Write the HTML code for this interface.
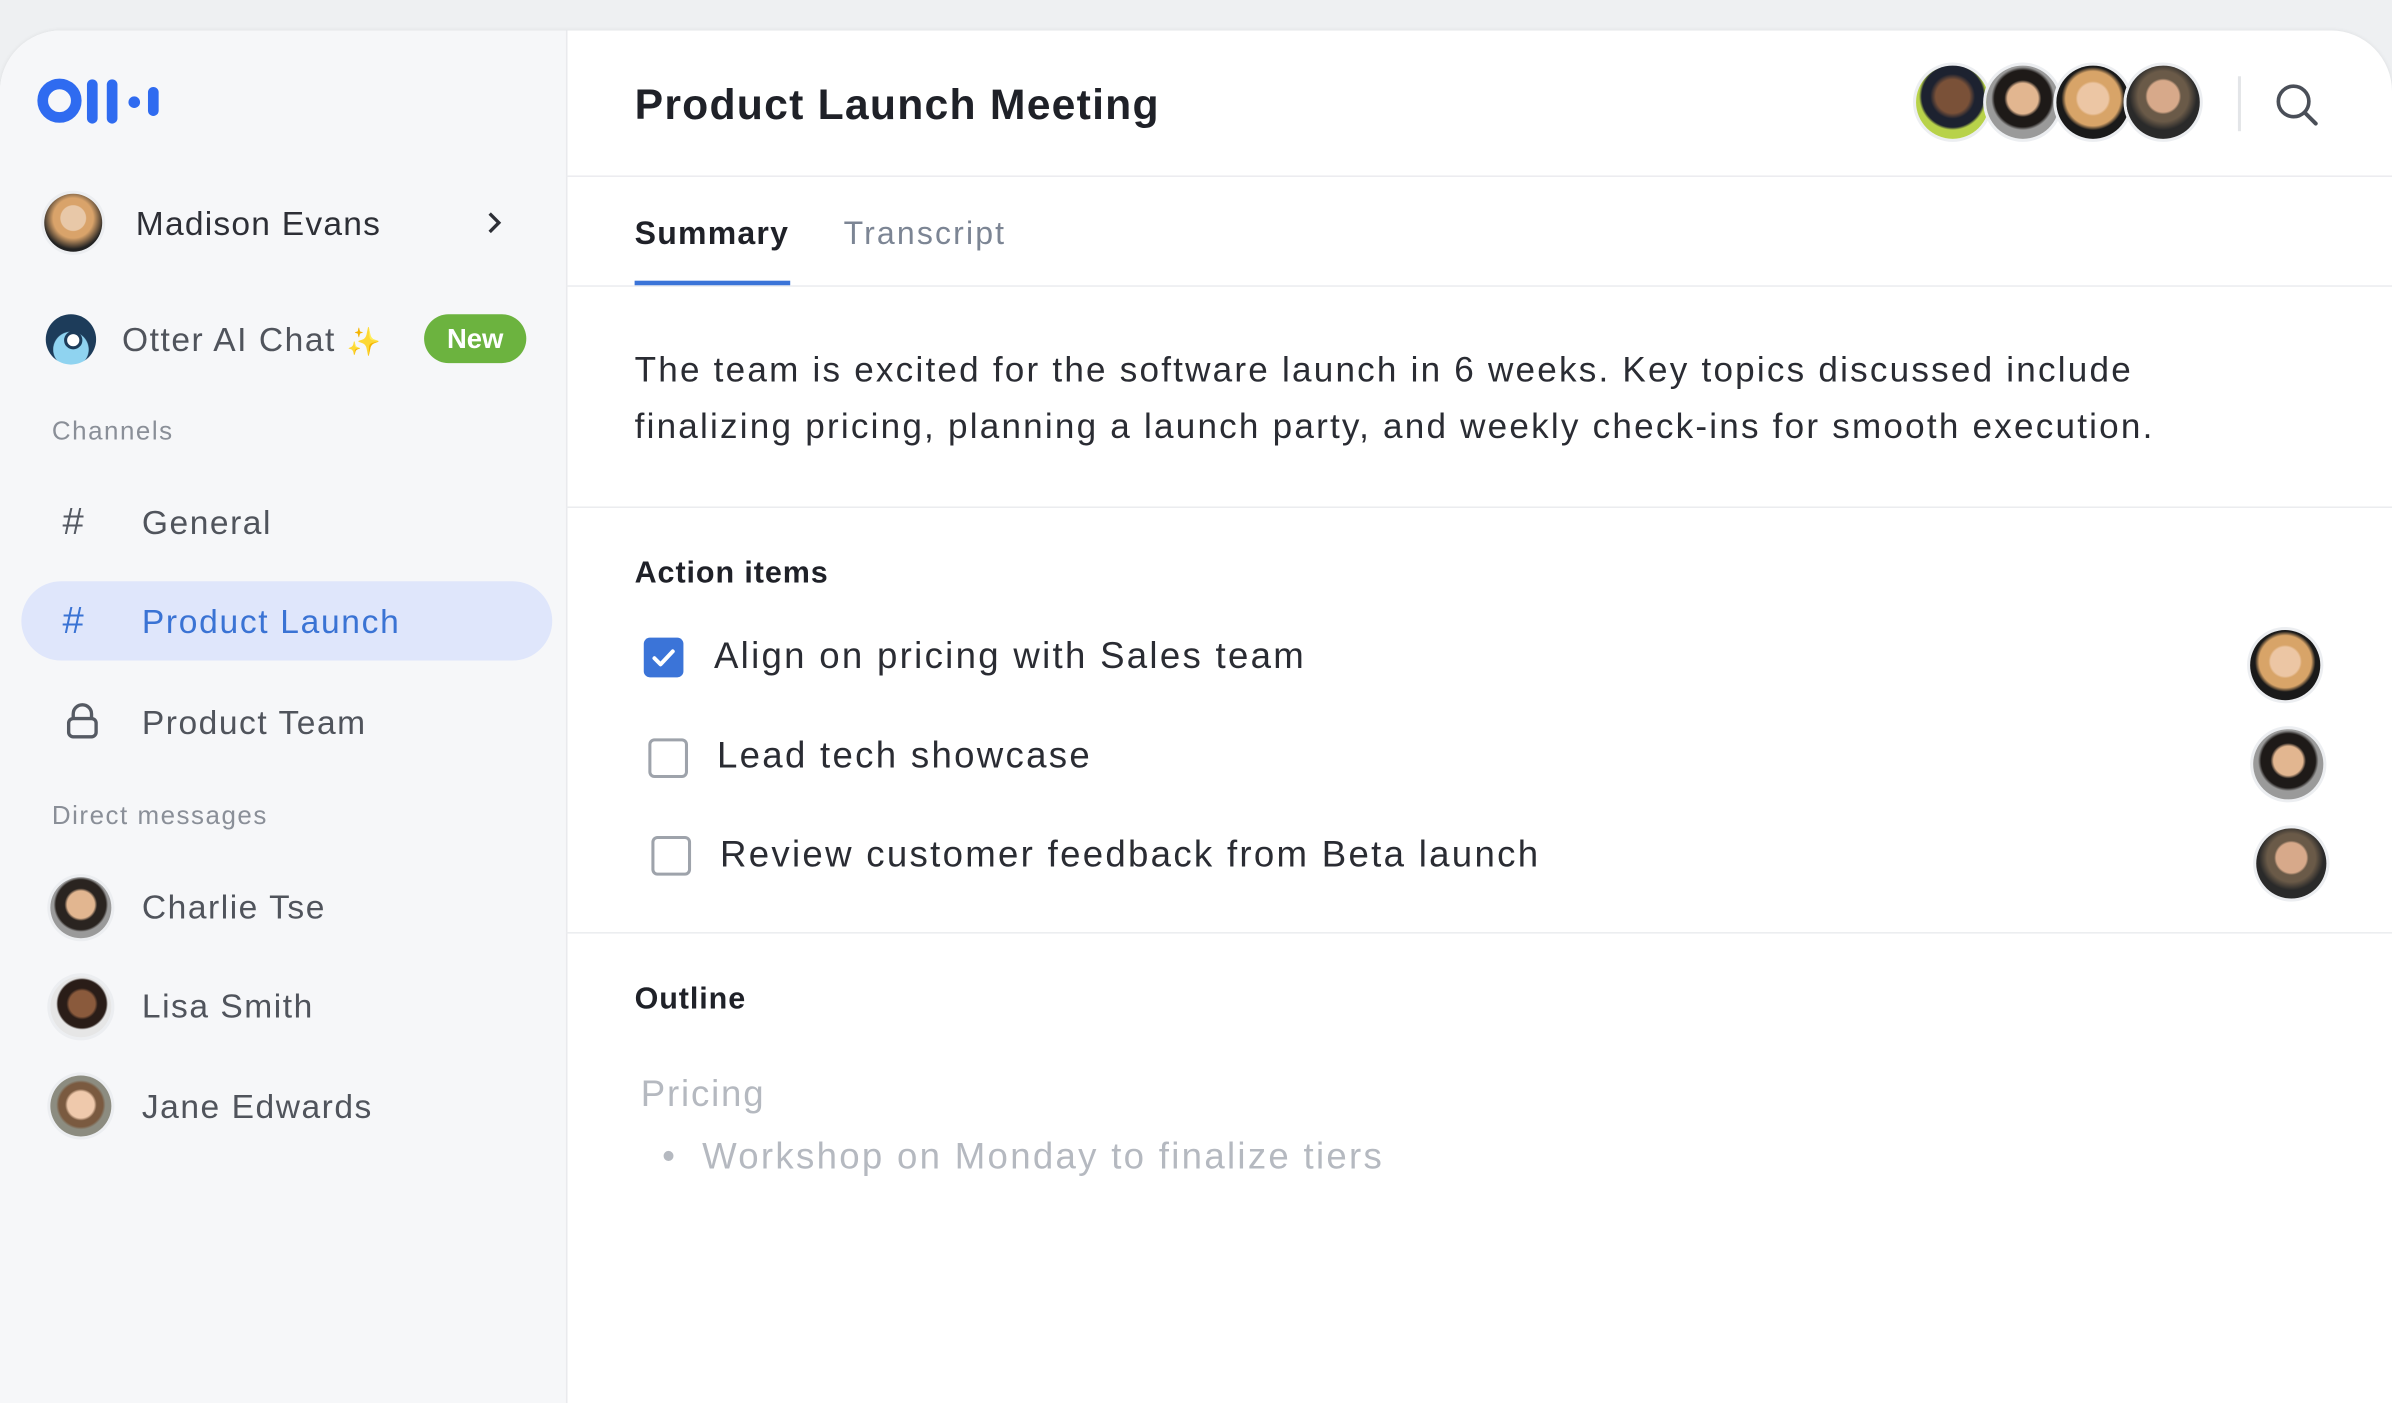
<!DOCTYPE html>
<html><head><meta charset="utf-8"><style>
html,body{margin:0;padding:0;width:2392px;height:1402px;overflow:hidden;background:#eef0f2;}
#w{position:absolute;left:0;top:0;width:1568px;height:919px;transform:scale(1.52551);transform-origin:0 0;font-family:"Liberation Sans",sans-serif;}
.card{position:absolute;left:0;top:20px;width:1568px;height:900px;background:#fff;border-radius:40px 40px 0 0;overflow:hidden;box-shadow:0 0 3px rgba(0,0,0,.08);}
.side{position:absolute;left:0;top:0;width:371px;height:100%;background:#f6f7f9;border-right:1px solid #e9eaed;}
.t{position:absolute;white-space:nowrap;line-height:1;letter-spacing:1px;}
.av{position:absolute;border-radius:50%;box-shadow:0 0 0 2px #eceef1;overflow:hidden;}
.hl{position:absolute;left:0;right:0;height:1px;background:#ebecef;}
.cb{position:absolute;width:22px;height:22px;border:2px solid #9ea3ab;border-radius:4px;}
</style></head><body><div id="w">
<div class="card">
<div class="side">
<svg style="position:absolute;left:24px;top:29px" width="82" height="34" viewBox="0 0 82 34"><circle cx="15" cy="17" r="11" fill="none" stroke="#2f6bf0" stroke-width="7"/><rect x="33" y="3" width="7" height="29" rx="3.5" fill="#2f6bf0"/><rect x="46" y="3" width="7" height="29" rx="3.5" fill="#2f6bf0"/><circle cx="64" cy="18" r="3.8" fill="#2f6bf0"/><rect x="73" y="8" width="7" height="19" rx="3.5" fill="#2f6bf0"/></svg>
<div class="av" style="left:29px;top:107px;width:38px;height:38px;background:radial-gradient(circle at 50% 42%,#e8c8a8 0 28%,#d9a36a 30% 45%,#222 70%)"></div>
<div class="t" style="left:89px;top:116px;font-size:22px;color:#2d2f36;letter-spacing:0.8px">Madison Evans</div>
<svg style="position:absolute;left:317px;top:118px" width="14" height="16" viewBox="0 0 14 16"><path d="M4 2l6 6-6 6" fill="none" stroke="#2d2f36" stroke-width="2.2"/></svg>
<div class="av" style="left:30px;top:186px;width:33px;height:33px;background:radial-gradient(circle at 50% 70%,#8fd3f0 0 40%,#1d3c5a 42%);box-shadow:none"></div>
<div style="position:absolute;left:42px;top:197px;width:8px;height:8px;border-radius:50%;background:#fff;border:2px solid #1d3c5a"></div>
<div class="t" style="left:80px;top:192px;font-size:22px;color:#50545c">Otter AI Chat <span style="color:#f2d36b;font-size:18px">✨</span></div>
<div style="position:absolute;left:278px;top:186px;width:67px;height:32px;border-radius:16px;background:#6cb33f;color:#fff;font-size:18px;font-weight:bold;text-align:center;line-height:32px">New</div>
<div class="t" style="left:34px;top:254px;font-size:17px;color:#8a8f98">Channels</div>
<div class="t" style="left:41px;top:310px;font-size:25px;color:#555a63">#</div>
<div class="t" style="left:93px;top:312px;font-size:22px;color:#50545c">General</div>
<div style="position:absolute;left:14px;top:361px;width:348px;height:52px;border-radius:26px;background:#dfe6fb"></div>
<div class="t" style="left:41px;top:375px;font-size:25px;color:#3a73d4">#</div>
<div class="t" style="left:93px;top:377px;font-size:22px;color:#3a73d4;letter-spacing:1.1px">Product Launch</div>
<svg style="position:absolute;left:43px;top:440px" width="22" height="26" viewBox="0 0 22 26"><path d="M5 11V8a6 6 0 0 1 12 0v3" fill="none" stroke="#555a63" stroke-width="2.2"/><rect x="2" y="11" width="18" height="12" rx="3" fill="none" stroke="#555a63" stroke-width="2.2"/></svg>
<div class="t" style="left:93px;top:443px;font-size:22px;color:#50545c">Product Team</div>
<div class="t" style="left:34px;top:506px;font-size:17px;color:#8a8f98">Direct messages</div>
<div class="av" style="left:33px;top:555px;width:40px;height:40px;background:radial-gradient(circle at 50% 45%,#e2b690 0 30%,#2a2420 36% 55%,#9a9a9a 60%)"></div>
<div class="t" style="left:93px;top:564px;font-size:22px;color:#50545c">Charlie Tse</div>
<div class="av" style="left:33px;top:620px;width:40px;height:40px;background:radial-gradient(circle at 52% 45%,#8a5a3c 0 28%,#2a1d18 34% 52%,#e6e6e6 56%)"></div>
<div class="t" style="left:93px;top:629px;font-size:22px;color:#50545c">Lisa Smith</div>
<div class="av" style="left:33px;top:685px;width:40px;height:40px;background:radial-gradient(circle at 50% 48%,#efc9ac 0 30%,#7a5a40 36% 50%,#8c8c80 56%)"></div>
<div class="t" style="left:93px;top:695px;font-size:22px;color:#50545c">Jane Edwards</div>
</div>
<!-- main -->
<div class="t" style="left:416px;top:35px;font-size:28px;font-weight:bold;color:#1f2128;letter-spacing:0.8px">Product Launch Meeting</div>
<div class="av" style="left:1256px;top:23px;width:48px;height:48px;background:radial-gradient(circle at 50% 42%,#7a5138 0 30%,#1d2230 40% 55%,#b8d24a 60%)"></div>
<div class="av" style="left:1302px;top:23px;width:48px;height:48px;background:radial-gradient(circle at 50% 45%,#e2b690 0 28%,#1e1a18 34% 52%,#9a9a9a 58%)"></div>
<div class="av" style="left:1348px;top:23px;width:48px;height:48px;background:radial-gradient(circle at 50% 45%,#ecc6a4 0 28%,#d8a468 32% 50%,#1a1a1a 58%)"></div>
<div class="av" style="left:1394px;top:23px;width:48px;height:48px;background:radial-gradient(circle at 50% 42%,#d7a98a 0 28%,#6a5a48 32% 45%,#2a2a2a 60%)"></div>
<div style="position:absolute;left:1467px;top:30px;width:2px;height:36px;background:#e3e5e8"></div>
<svg style="position:absolute;left:1490px;top:33px" width="32" height="32" viewBox="0 0 32 32"><circle cx="13.5" cy="13.5" r="10" fill="none" stroke="#4a4f58" stroke-width="2.4"/><path d="M21 21l7 7" stroke="#4a4f58" stroke-width="2.6" stroke-linecap="round"/></svg>
<div class="hl" style="left:371px;top:95px"></div>
<div class="t" style="left:416px;top:123px;font-size:21px;font-weight:bold;color:#1f2128;letter-spacing:0.8px">Summary</div>
<div class="t" style="left:553px;top:123px;font-size:21px;color:#7c8594;letter-spacing:1.4px">Transcript</div>
<div class="hl" style="left:371px;top:167px"></div>
<div style="position:absolute;left:416px;top:164px;width:102px;height:3px;background:#3b74d8"></div>
<div class="t" style="left:416px;top:211px;font-size:23px;color:#2a2c33;letter-spacing:1.45px">The team is excited for the software launch in 6 weeks. Key topics discussed include</div>
<div class="t" style="left:416px;top:248px;font-size:23px;color:#2a2c33;letter-spacing:1.45px">finalizing pricing, planning a launch party, and weekly check-ins for smooth execution.</div>
<div class="hl" style="left:371px;top:312px"></div>
<div class="t" style="left:416px;top:346px;font-size:20px;font-weight:bold;color:#1f2128;letter-spacing:0.6px">Action items</div>
<div style="position:absolute;left:422px;top:398px;width:26px;height:26px;border-radius:4px;background:#3b74d8"></div>
<svg style="position:absolute;left:422px;top:398px" width="26" height="26" viewBox="0 0 26 26"><path d="M7 13.5l4 4 8-8.5" fill="none" stroke="#fff" stroke-width="2.6" stroke-linecap="round" stroke-linejoin="round"/></svg>
<div class="t" style="left:468px;top:399px;font-size:24px;color:#2a2c33;letter-spacing:1.5px">Align on pricing with Sales team</div>
<div class="cb" style="left:425px;top:464px"></div>
<div class="t" style="left:470px;top:464px;font-size:24px;color:#2a2c33;letter-spacing:1.5px">Lead tech showcase</div>
<div class="cb" style="left:427px;top:528px"></div>
<div class="t" style="left:472px;top:529px;font-size:24px;color:#2a2c33;letter-spacing:1.5px">Review customer feedback from Beta launch</div>
<div class="av" style="left:1475px;top:393px;width:46px;height:46px;background:radial-gradient(circle at 50% 45%,#ecc6a4 0 28%,#d8a468 32% 50%,#1a1a1a 58%)"></div>
<div class="av" style="left:1477px;top:458px;width:46px;height:46px;background:radial-gradient(circle at 50% 45%,#e2b690 0 28%,#1e1a18 34% 52%,#9a9a9a 58%)"></div>
<div class="av" style="left:1479px;top:523px;width:46px;height:46px;background:radial-gradient(circle at 50% 42%,#d7a98a 0 28%,#6a5a48 32% 45%,#2a2a2a 60%)"></div>
<div class="hl" style="left:371px;top:591px"></div>
<div class="t" style="left:416px;top:625px;font-size:20px;font-weight:bold;color:#1f2128;letter-spacing:0.6px">Outline</div>
<div class="t" style="left:420px;top:686px;font-size:24px;color:#b5b9c0;letter-spacing:1.2px">Pricing</div>
<div class="t" style="left:434px;top:727px;font-size:24px;color:#b5b9c0;letter-spacing:1.5px">•&nbsp;&nbsp;Workshop on Monday to finalize tiers</div>
</div>
</div></body></html>
